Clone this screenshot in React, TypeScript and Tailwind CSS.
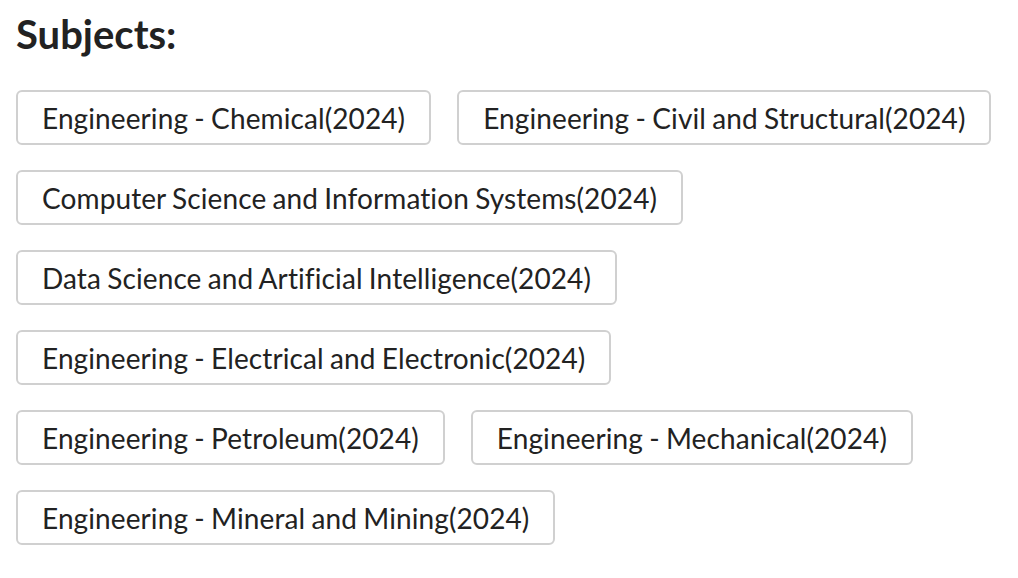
const subjects = [
  'Engineering - Chemical(2024)',
  'Engineering - Civil and Structural(2024)',
  'Computer Science and Information Systems(2024)',
  'Data Science and Artificial Intelligence(2024)',
  'Engineering - Electrical and Electronic(2024)',
  'Engineering - Petroleum(2024)',
  'Engineering - Mechanical(2024)',
  'Engineering - Mineral and Mining(2024)',
];

export default function App() {
  return (
    <div className="min-h-[578px] bg-white px-4 pt-[10px] text-[#222] font-['Lato',sans-serif]">
      <h2 className="text-[40px] font-bold leading-[48px]">Subjects:</h2>
      <div className="mt-[32px] flex flex-wrap gap-x-[26px] gap-y-[25px]">
        {subjects.map((s) => (
          <span
            key={s}
            className="h-[55px] px-[24px] flex items-center border-2 border-[#d0d0d0] rounded-[6px] text-[28px] leading-none tracking-[0.1px] [word-spacing:-1px]"
          >
            {s}
          </span>
        ))}
      </div>
    </div>
  );
}
